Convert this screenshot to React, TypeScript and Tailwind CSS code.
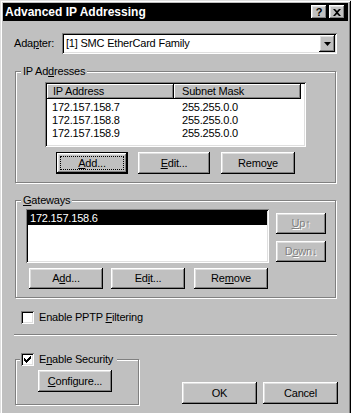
import type { ReactNode } from 'react';

const raised =
  'bg-[#c0c0c0] shadow-[inset_-1px_-1px_0_#000,inset_1px_1px_0_#fff,inset_-2px_-2px_0_#808080,inset_2px_2px_0_#dfdfdf]';
const sunken =
  'bg-white shadow-[inset_1px_1px_0_#808080,inset_-1px_-1px_0_#fff,inset_2px_2px_0_#000,inset_-2px_-2px_0_#dfdfdf]';
const etched = 'border border-[#808080] shadow-[1px_1px_0_#fff,inset_1px_1px_0_#fff]';

function Btn({
  children,
  className = '',
  focus,
  disabled,
}: {
  children: ReactNode;
  className?: string;
  focus?: boolean;
  disabled?: boolean;
}) {
  if (focus) {
    return (
      <div className={`flex border border-black ${className}`}>
        <div className={`flex flex-1 p-[3px] ${raised}`}>
          <span className="flex flex-1 items-center justify-center border border-dotted border-black">
            {children}
          </span>
        </div>
      </div>
    );
  }
  return (
    <div
      className={`flex items-center justify-center ${raised} ${
        disabled ? 'text-[#808080] [text-shadow:1px_1px_0_#fff]' : ''
      } ${className}`}
    >
      {children}
    </div>
  );
}

function Check({ checked }: { checked?: boolean }) {
  return (
    <span className={`flex h-[13px] w-[13px] shrink-0 items-center justify-center ${sunken}`}>
      {checked && (
        <svg width="7" height="7" viewBox="0 0 7 7">
          <path d="M0 2h1v1h1v1h1V3h1V2h1V1h1V0h1v3H6v1H5v1H4v1H3v1H2V6H1V5H0z" fill="#000" />
        </svg>
      )}
    </span>
  );
}

function Group({ label, className = '', children }: { label: ReactNode; className?: string; children: ReactNode }) {
  return (
    <div className={`relative ${etched} ${className}`}>
      <span className="absolute -top-[7px] left-[5px] bg-[#c0c0c0] px-[2px] leading-[13px]">{label}</span>
      {children}
    </div>
  );
}

const ips = ['172.157.158.7', '172.157.158.8', '172.157.158.9'];

export default function App() {
  return (
    <div className="h-[413px] w-[351px] overflow-hidden bg-[#c0c0c0] font-['Liberation_Sans',Arial,sans-serif] text-[11px] tracking-[-0.2px] text-black">
      <div className="h-[430px] p-[3px] shadow-[inset_1px_1px_0_#dfdfdf,inset_-1px_-1px_0_#000,inset_2px_2px_0_#fff,inset_-2px_-2px_0_#808080]">
        {/* title bar */}
        <div className="flex h-[18px] items-center bg-black pl-[2px] pr-[3px]">
          <span className="text-[12px] font-bold tracking-normal text-white">Advanced IP Addressing</span>
          <div className={`ml-auto flex h-[14px] w-[16px] items-center justify-center text-[11px] font-bold leading-none ${raised}`}>
            ?
          </div>
          <div className={`ml-[2px] flex h-[14px] w-[16px] items-center justify-center ${raised}`}>
            <svg width="8" height="7" viewBox="0 0 8 7">
              <path d="M0 0h2l2 2 2-2h2L5 3.5 8 7H6L4 5 2 7H0l3-3.5z" fill="#000" />
            </svg>
          </div>
        </div>

        <div className="px-[12px]">
          {/* adapter */}
          <div className="-mr-[1px] mt-[12px] flex h-[21px] items-center">
            <span className="-ml-[1px] w-[48px]">
              Ada<u>p</u>ter:
            </span>
            <div className={`flex h-[21px] flex-1 items-center pl-[4px] ${sunken}`}>
              <span>[1] SMC EtherCard Family</span>
              <div className={`ml-auto mr-[2px] flex h-[17px] w-[16px] items-center justify-center ${raised}`}>
                <svg width="7" height="4" viewBox="0 0 7 4">
                  <path d="M0 0h7L3.5 4z" fill="#000" />
                </svg>
              </div>
            </div>
          </div>

          {/* IP addresses */}
          <Group
            className="mt-[17px] w-[321px] pb-[8px] pt-[10px]"
            label={
              <>
                IP Ad<u>d</u>resses
              </>
            }
          >
            <div className={`ml-[29px] h-[65px] w-[261px] p-[2px] ${sunken}`}>
              <div className="flex h-[15px] leading-[15px]">
                <span className="w-[127px] bg-[#c0c0c0] pl-[6px] shadow-[inset_-1px_-1px_0_#000,inset_1px_1px_0_#fff,inset_-2px_-2px_0_#808080]">
                  IP Address
                </span>
                <span className="w-[127px] bg-[#c0c0c0] pl-[8px] shadow-[inset_-1px_-1px_0_#000,inset_1px_1px_0_#fff,inset_-2px_-2px_0_#808080]">
                  Subnet Mask
                </span>
              </div>
              <div className="pt-[2px]">
                {ips.map((ip) => (
                  <div key={ip} className="flex leading-[13px]">
                    <span className="w-[127px] pl-[5px]">{ip}</span>
                    <span className="pl-[8px]">255.255.0.0</span>
                  </div>
                ))}
              </div>
            </div>
            <div className="ml-[40px] mt-[5px] flex">
              <Btn focus className="h-[22px] w-[72px]">
                <span>
                  <u>A</u>dd...
                </span>
              </Btn>
              <Btn className="ml-[10px] h-[22px] w-[72px]">
                <span>
                  <u>E</u>dit...
                </span>
              </Btn>
              <Btn className="ml-[11px] h-[22px] w-[74px]">
                <span>
                  Remo<u>v</u>e
                </span>
              </Btn>
            </div>
          </Group>

          {/* gateways */}
          <Group
            className="mt-[17px] w-[321px] pb-[8px] pt-[8px]"
            label={
              <>
                <u>G</u>ateways
              </>
            }
          >
            <div className="flex pl-[10px]">
              <div className={`h-[54px] w-[243px] p-[2px] ${sunken}`}>
                <div className="bg-black pl-[2px] leading-[14px] text-white">172.157.158.6</div>
              </div>
              <div className="ml-[7px] flex flex-col gap-[7px] pt-[4px]">
                <Btn disabled className="h-[21px] w-[50px]">
                  <span>
                    <u>U</u>p↑
                  </span>
                </Btn>
                <Btn disabled className="h-[21px] w-[50px]">
                  <span>
                    D<u>o</u>wn↓
                  </span>
                </Btn>
              </div>
            </div>
            <div className="mt-[5px] flex pl-[13px]">
              <Btn className="h-[21px] w-[74px]">
                <span>
                  A<u>d</u>d...
                </span>
              </Btn>
              <Btn className="ml-[8px] h-[21px] w-[74px]">
                <span>
                  Ed<u>i</u>t...
                </span>
              </Btn>
              <Btn className="ml-[9px] h-[21px] w-[74px]">
                <span>
                  Re<u>m</u>ove
                </span>
              </Btn>
            </div>
          </Group>

          {/* PPTP */}
          <div className="mt-[13px] flex h-[13px] items-center pl-[6px]">
            <Check />
            <span className="ml-[5px]">
              Enable PPTP <u>F</u>iltering
            </span>
          </div>

          <div className="-mx-[1px] mt-[10px] h-[2px] border-b border-t border-b-white border-t-[#808080]" />

          {/* security + OK/Cancel */}
          <div className="flex items-start">
            <div className={`relative mt-[23px] h-[46px] w-[124px] ${etched}`}>
              <div className="absolute -top-[7px] left-[4px] flex h-[13px] items-center bg-[#c0c0c0] pl-[1px] pr-[4px]">
                <Check checked />
                <span className="ml-[5px]">
                  E<u>n</u>able Security
                </span>
              </div>
              <Btn className="ml-[22px] mt-[10px] h-[22px] w-[74px]">
                <span>
                  <u>C</u>onfigure...
                </span>
              </Btn>
            </div>
            <div className="-mr-[2px] ml-auto mt-[46px] flex gap-[6px]">
              <Btn className="h-[22px] w-[75px]">OK</Btn>
              <Btn className="h-[22px] w-[75px]">Cancel</Btn>
            </div>
          </div>
        </div>
      </div>
    </div>
  );
}
